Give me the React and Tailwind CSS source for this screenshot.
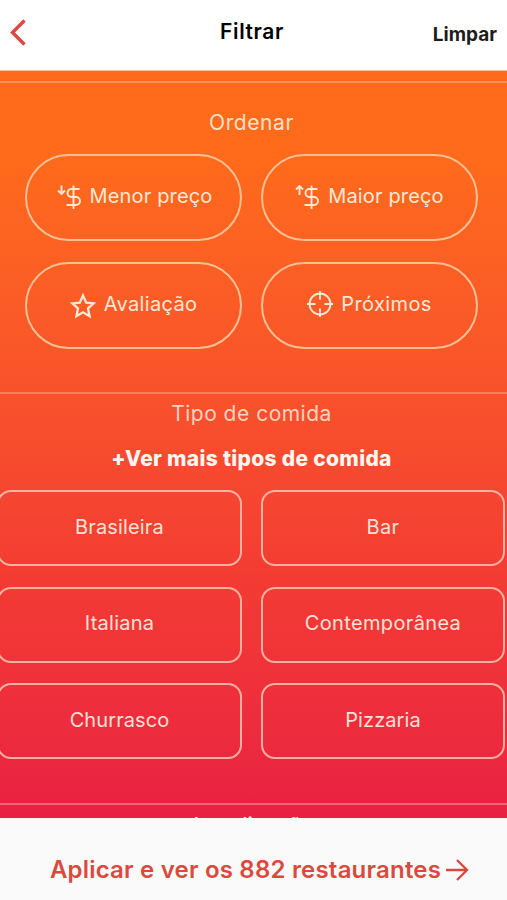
import clsx from 'clsx';

const sortOptions = [
  { label: 'Menor preço', icon: PriceDown, text: 'tracking-[0.15px]', gap: 'gap-[9px] pl-[2px]' },
  { label: 'Maior preço', icon: PriceUp, text: 'tracking-[0.15px]', gap: 'gap-[9px]' },
  { label: 'Avaliação', icon: StarIcon, text: 'tracking-[0.35px]', gap: 'gap-2' },
  { label: 'Próximos', icon: TargetIcon, text: 'tracking-[0.4px]', gap: 'gap-2' },
];

const foodTypes = [
  { label: 'Brasileira', text: 'tracking-[0.15px]' },
  { label: 'Bar', text: 'tracking-[0.35px]' },
  { label: 'Italiana', text: 'tracking-[0.25px]' },
  { label: 'Contemporânea', text: 'tracking-[0.35px]' },
  { label: 'Churrasco', text: 'tracking-[0.1px]' },
  { label: 'Pizzaria', text: 'tracking-[0.1px]' },
];

function Dollar() {
  return <path d="M22.500 4h-8a4 4 0 0 0 0 8H19a4 4 0 0 1 0 8H9.500M16.500 0.500v23.500" />;
}

function PriceDown() {
  return (
    <svg width="24" height="26" viewBox="0 0 24 26" fill="none" stroke="currentColor" strokeWidth="1.9" className="shrink-0">
      <path d="M4.500 0.500v8.500M1 5.500L4.500 9 8 5.500" />
      <Dollar />
    </svg>
  );
}

function PriceUp() {
  return (
    <svg width="24" height="26" viewBox="0 0 24 26" fill="none" stroke="currentColor" strokeWidth="1.9" className="shrink-0">
      <path d="M4.500 10V1.500M1 4.500L4.500 1 8 4.500" />
      <Dollar />
    </svg>
  );
}

function StarIcon() {
  return (
    <svg width="26" height="26" viewBox="0 0 26 26" fill="none" stroke="currentColor" strokeWidth="2.3" className="shrink-0">
      <path d="M13 2.500l3.200 7.100 7.300.8-5.500 5 1.600 7.800-6.600-3.900-6.600 3.900L8 15.400l-5.500-5 7.300-.8z" />
    </svg>
  );
}

function TargetIcon() {
  return (
    <svg width="26" height="26" viewBox="0 0 26 26" fill="none" stroke="currentColor" strokeWidth="1.9" className="mb-[3px] shrink-0">
      <circle cx="13" cy="13" r="10.500" />
      <path d="M13 0v8.500M13 17.500V26M0 13h8.500M17.500 13H26" />
    </svg>
  );
}

function SortButton({ label, icon: Icon, text, gap }) {
  return (
    <button
      type="button"
      className={clsx(
        'flex h-[87px] items-center justify-center rounded-full border-2 border-[#ffbe94] text-[#ffe8d6]',
        gap
      )}
    >
      <Icon />
      <span className={clsx('whitespace-nowrap pb-[3px] text-[20px] leading-6', text)}>{label}</span>
    </button>
  );
}

function FoodButton({ label, text }) {
  return (
    <button
      type="button"
      className="flex h-[76px] items-center justify-center rounded-[14px] border-2 border-[#ffb0a0] pb-[3px] text-[#ffe0d6]"
    >
      <span className={clsx('whitespace-nowrap text-[20px] leading-6', text)}>{label}</span>
    </button>
  );
}

export default function App() {
  return (
    <div className="flex h-[900px] w-[507px] flex-col overflow-hidden bg-white font-['Inter',sans-serif]">
      <header className="grid h-[70px] shrink-0 grid-cols-3 items-center pb-1.5">
        <svg width="18" height="28" viewBox="0 0 18 28" fill="none" stroke="#d94841" strokeWidth="3.4" className="ml-[9px]">
          <path d="M15.500 2.500L3.500 14.500l12 12" />
        </svg>
        <h1 className="pr-[3px] text-center text-[21px] font-semibold leading-6 tracking-[0.6px] text-black">Filtrar</h1>
        <button type="button" className="mt-1.5 pr-[10px] text-right text-[19px] font-bold leading-6 text-[#1c1c1c]">
          Limpar
        </button>
      </header>

      <main className="flex h-[748px] shrink-0 flex-col overflow-hidden border-t border-[#ffc2a0] bg-linear-to-b from-[#ff6a1b] from-12% via-[#f33b33] via-68% to-[#ea2042]">
        <section className="mt-2.5 flex h-[311px] shrink-0 flex-col border-t-2 border-[#ff8f55]">
          <h2 className="mt-7 pr-1 text-center text-[21px] leading-6 tracking-[0.6px] text-[#ffe0c8]">Ordenar</h2>
          <div className="mt-[19px] grid grid-cols-[217px_217px] gap-x-[19px] gap-y-[21px] pl-[25px]">
            {sortOptions.map((option) => (
              <SortButton key={option.label} {...option} />
            ))}
          </div>
        </section>

        <section className="flex h-[411px] shrink-0 flex-col border-t-2 border-[#ff8058]">
          <h2 className="mt-2 pr-1 text-center text-[21px] leading-6 tracking-[0.5px] text-[#ffd2c0]">Tipo de comida</h2>
          <button type="button" className="mt-[21px] pr-1 text-center text-[21px] font-extrabold leading-6 tracking-[0.3px] text-[#fff6f0]">
            +Ver mais tipos de comida
          </button>
          <div className="-ml-[3px] mt-[19px] grid grid-cols-[245px_244px] gap-x-[19px] gap-y-[20.5px]">
            {foodTypes.map((type) => (
              <FoodButton key={type.label} {...type} />
            ))}
          </div>
        </section>

        <section className="shrink-0 border-t-2 border-[#f4657a]">
          <h2 className="mt-[9px] text-center text-[21px] font-medium leading-6 text-[#ffe4e4]">Localização</h2>
        </section>
      </main>

      <footer className="flex h-[82px] shrink-0 items-center justify-center bg-[#fafafa] pl-3 pt-[21px] text-[#d94a3d]">
        <span className="whitespace-nowrap text-[24px] font-semibold leading-7 tracking-[0.2px]">
          Aplicar e ver os 882 restaurantes
        </span>
        <svg width="24" height="24" viewBox="0 0 24 24" fill="none" stroke="currentColor" strokeWidth="2.4" className="ml-1">
          <path d="M1 12h20M12 2l10 10-10 10" />
        </svg>
      </footer>
    </div>
  );
}
